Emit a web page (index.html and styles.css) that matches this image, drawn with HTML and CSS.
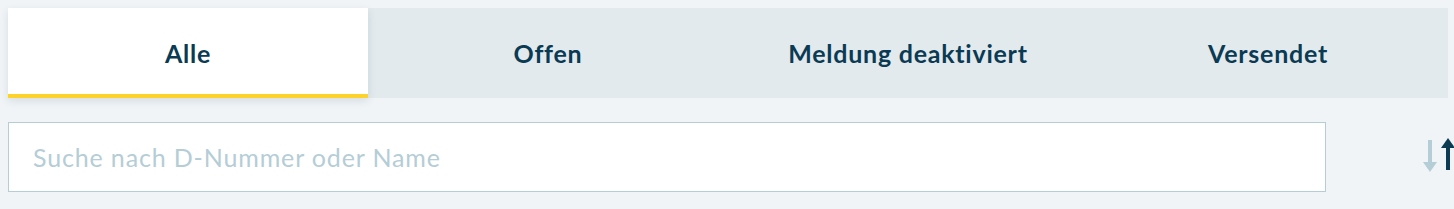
FILE: index.html
```html
<!DOCTYPE html>
<html lang="de">
<head>
<meta charset="utf-8">
<link rel="stylesheet" href="styles.css">
</head>
<body>
<div class="page">
  <nav class="tabs">
    <div class="tab active">Alle</div>
    <div class="tab">Offen</div>
    <div class="tab">Meldung deaktiviert</div>
    <div class="tab">Versendet</div>
  </nav>
  <div class="search-row">
    <input class="search" type="text" placeholder="Suche nach D-Nummer oder Name">
    <button class="sort" type="button" aria-label="Sortieren">
      <svg width="34" height="34" viewBox="0 0 34 34">
        <path d="M7 2 V26" stroke="#b5cdd6" stroke-width="4" fill="none"/>
        <path d="M0 24 L14 24 L7 34 Z" fill="#b5cdd6"/>
        <path d="M25 8 V32" stroke="#0b3a53" stroke-width="4" fill="none"/>
        <path d="M18 10 L32 10 L25 0 Z" fill="#0b3a53"/>
      </svg>
    </button>
  </div>
</div>
</body>
</html>
```
FILE: styles.css
```css
html, body {
  margin: 0;
  padding: 0;
  background: #f0f4f7;
  overflow: hidden;
}
body {
  padding: 8px;
  font-family: Lato, "Open Sans", sans-serif;
  font-variant-ligatures: none;
}
.page {
  width: 1480px;
}
.tabs {
  display: flex;
  width: 1440px;
  height: 90px;
  background: #e3eaee;
}
.tab {
  flex: 0 0 360px;
  display: flex;
  align-items: center;
  justify-content: center;
  font-size: 25px;
  font-weight: 700;
  letter-spacing: 0.75px;
  color: #0b3a53;
  box-sizing: border-box;
}
.tab.active {
  background: #fff;
  border-bottom: 4px solid #fdd22a;
  padding-top: 4px;
  box-shadow: 0 3px 8px rgba(30, 60, 80, 0.12);
  position: relative;
}
.search-row {
  display: flex;
  align-items: flex-start;
  margin-top: 24px;
}
.search {
  flex: 0 0 1318px;
  width: 1318px;
  height: 70px;
  box-sizing: border-box;
  border: 1px solid #b5cdd9;
  background: #fff;
  padding: 0 24px;
  font-family: Lato, sans-serif;
  font-variant-ligatures: none;
  font-size: 25px;
  letter-spacing: 0.85px;
  color: #0b3a53;
  outline: none;
}
.search::placeholder {
  color: #b5cdd6;
}
.sort {
  flex: 0 0 auto;
  margin-left: 97px;
  margin-top: 16px;
  padding: 0;
  border: 0;
  background: none;
  display: flex;
}
```
